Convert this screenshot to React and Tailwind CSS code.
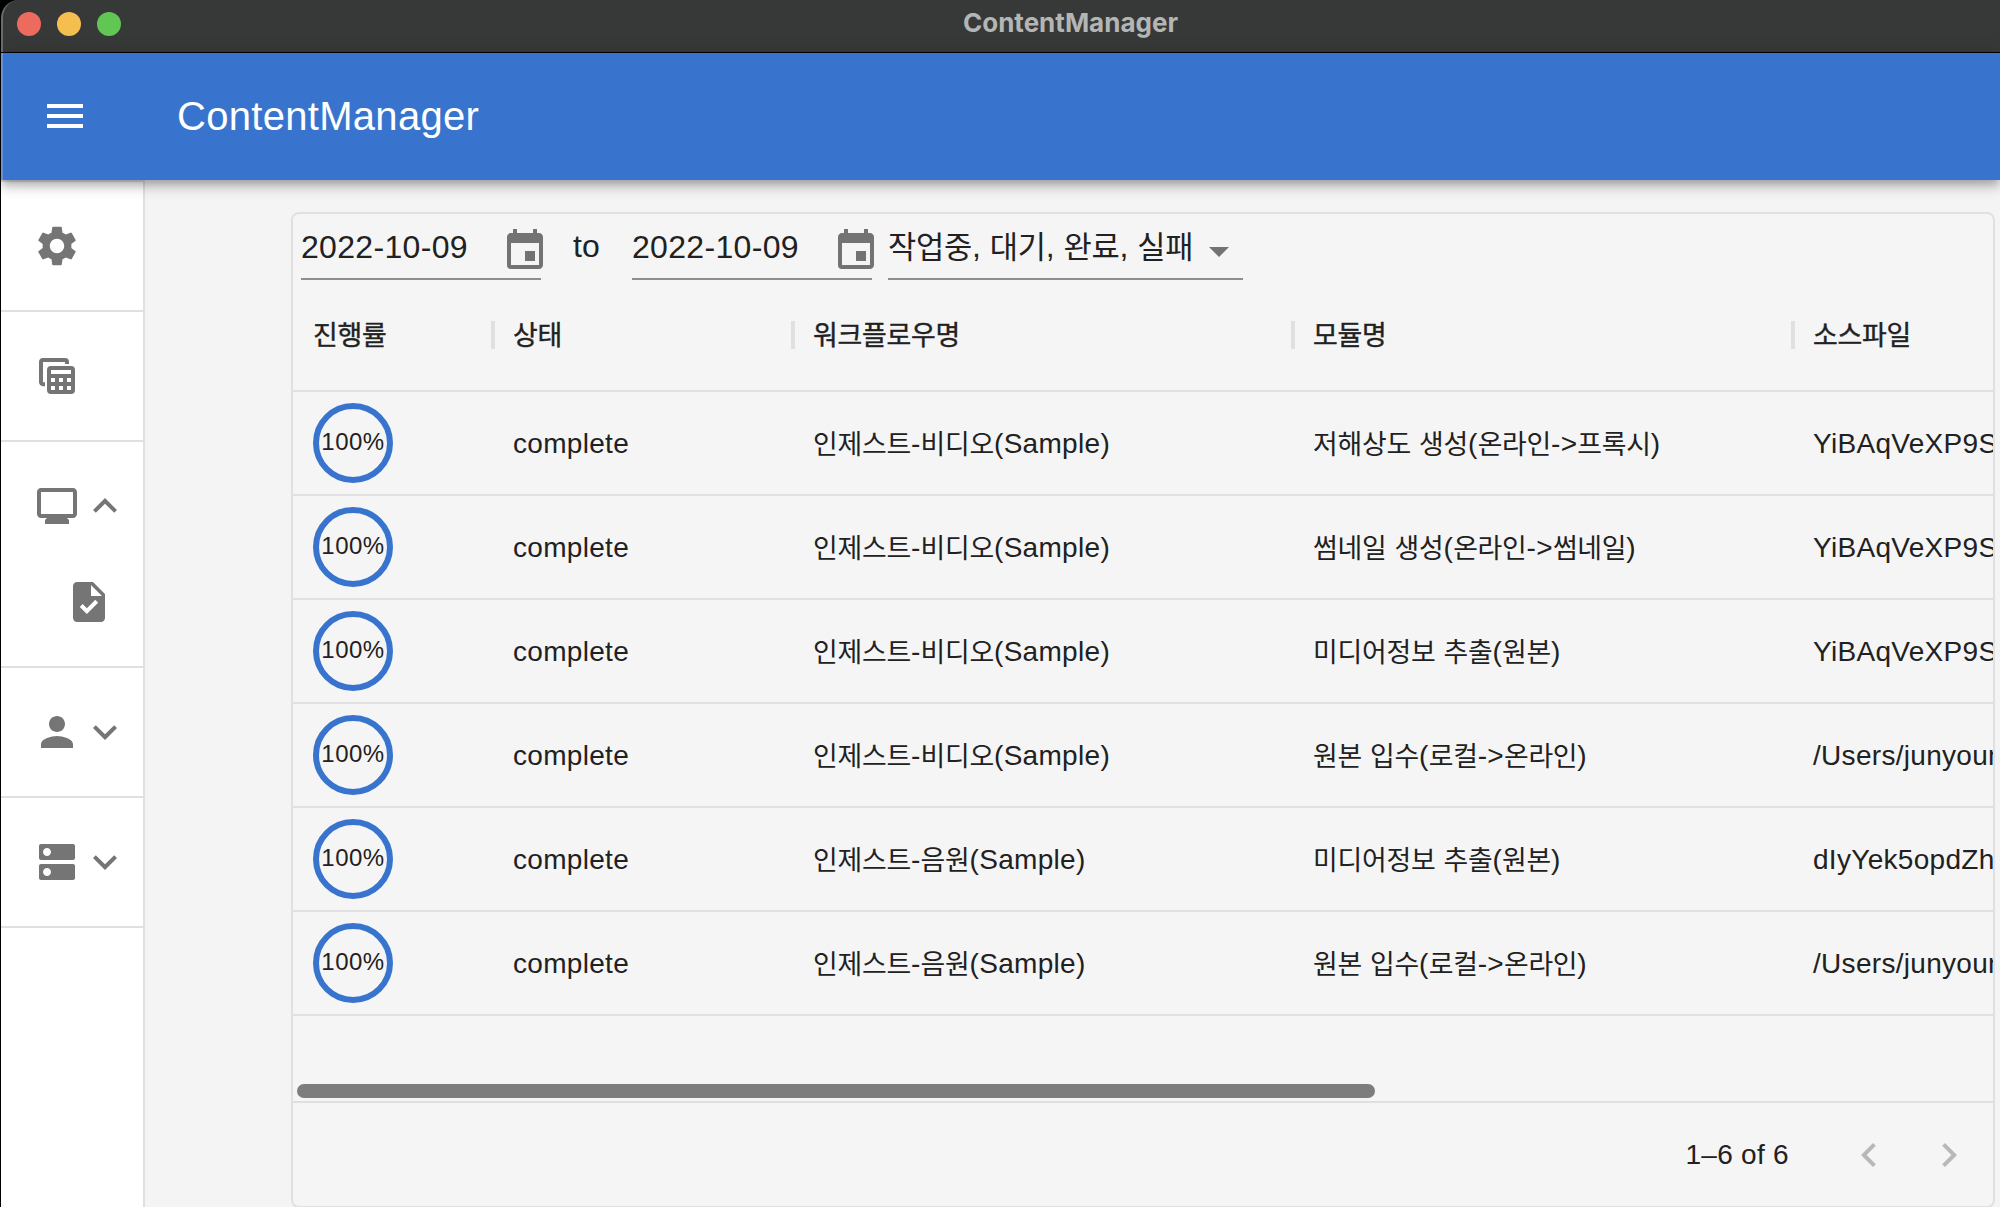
import { MdSettings, MdPerson, MdDns, MdExpandLess, MdExpandMore, MdEvent, MdArrowDropDown, MdMenu, MdChevronLeft, MdChevronRight } from 'react-icons/md';

const ROWS = [
  ['인제스트-비디오(Sample)', '저해상도 생성(온라인->프록시)', 'YiBAqVeXP9S'],
  ['인제스트-비디오(Sample)', '썸네일 생성(온라인->썸네일)', 'YiBAqVeXP9S'],
  ['인제스트-비디오(Sample)', '미디어정보 추출(원본)', 'YiBAqVeXP9S'],
  ['인제스트-비디오(Sample)', '원본 입수(로컬->온라인)', '/Users/junyoun'],
  ['인제스트-음원(Sample)', '미디어정보 추출(원본)', 'dIyYek5opdZh'],
  ['인제스트-음원(Sample)', '원본 입수(로컬->온라인)', '/Users/junyoun'],
];

// Sets Hangul runs slightly smaller than the Latin text around them.
function Ko({ children }) {
  return children.split(/([가-힣]+)/).map((part, i) =>
    /[가-힣]/.test(part) ? <span key={i} className="align-[-0.5px] text-[0.96em] tracking-[-0.009em]">{part}</span> : part
  );
}

function TableCopyIcon() {
  return (
    <svg viewBox="0 0 24 24" className="size-12" fill="none" stroke="currentColor" strokeWidth="2">
      <path d="M6 16.100H5a1.100 1.100 0 0 1-1-1V4.900a1 1 0 0 1 1-.9h11a1 1 0 0 1 1 1v1" />
      <rect x="8" y="8" width="12" height="12" rx="1" />
      <path d="M8 12h12M8 16h12M12 12v8M16 12v8" />
    </svg>
  );
}

function MonitorIcon() {
  return (
    <svg viewBox="0 0 24 24" className="size-12" fill="currentColor">
      <path d="M20 3H4c-1.100 0-2 .9-2 2v11c0 1.100.9 2 2 2h3l-1 1v2h12v-2l-1-1h3c1.100 0 2-.9 2-2V5c0-1.100-.9-2-2-2zm0 13H4V5h16v11z" />
    </svg>
  );
}

function TaskIcon() {
  return (
    <svg viewBox="0 0 24 24" className="size-12" fill="currentColor">
      <path d="M14 2H6c-1.100 0-2 .9-2 2v16c0 1.100.9 2 2 2h12c1.100 0 2-.9 2-2V8l-6-6zm-3.060 16L7.400 14.460l1.410-1.410 2.120 2.120 4.240-4.240 1.410 1.410L10.940 18zM13 9V3.500L18.500 9H13z" />
    </svg>
  );
}

function SideRow({ icon, arrow }) {
  return (
    <div className="flex h-32 items-center pl-8">
      {icon}
      {arrow}
    </div>
  );
}

function DateField() {
  return (
    <div className="flex h-[66px] w-60 items-start border-b-2 border-[#8e8e8e]">
      <span className="w-[200px] shrink-0 whitespace-nowrap pt-[10px] text-[32px] leading-[46px] tracking-[0.01em]">2022-10-09</span>
      <MdEvent className="mt-[13px] size-12 shrink-0 text-[#737373]" />
    </div>
  );
}

const WIDTHS = ['w-[200px]', 'w-[300px]', 'w-[500px]', 'w-[500px]', 'w-[500px]'];

export default function App() {
  return (
    <div className="flex h-[1207px] w-[2000px] flex-col overflow-hidden border-l border-black bg-[#f4f4f4] font-['Liberation_Sans','Noto_Sans_CJK_KR',sans-serif] text-[#212121]">
      <div className="h-[53px] shrink-0 bg-black">
        <div className="relative flex h-[52px] items-start rounded-tl-[18px] border-l-2 border-[#6a6b6a] bg-[#373938] pl-3.5 pt-3">
          <div className="flex gap-4">
            <i className="size-6 rounded-full bg-[#ed6a5f]" />
            <i className="size-6 rounded-full bg-[#f5bf4f]" />
            <i className="size-6 rounded-full bg-[#62c655]" />
          </div>
          <div className="absolute inset-x-0 top-[6px] pl-[138px] text-center font-['Inter',sans-serif] text-[26px] font-bold leading-[34px] text-[#b4b5b5]">ContentManager</div>
        </div>
      </div>
      <header className="relative z-10 flex h-[127px] shrink-0 items-center border-l-2 border-[#6793d6] bg-[#3874cd] pb-px pl-[38px] text-white shadow-[0_4px_8px_-2px_rgba(0,0,0,0.2),0_8px_10px_rgba(0,0,0,0.14),0_2px_20px_rgba(0,0,0,0.12)]">
        <MdMenu className="size-12" />
        <h1 className="ml-[88px] pb-px text-[40px] tracking-[0.0075em]">ContentManager</h1>
      </header>
      <div className="flex min-h-0 flex-1">
        <nav className="w-36 shrink-0 border-r-2 border-t-2 border-[#e0e0e0] bg-white text-[#757575]">
          <div className="border-b-2 border-[#e0e0e0]"><SideRow icon={<MdSettings className="size-12" />} /></div>
          <div className="border-b-2 border-[#e0e0e0]"><SideRow icon={<TableCopyIcon />} /></div>
          <div className="h-[226px] border-b-2 border-[#e0e0e0]">
            <SideRow icon={<MonitorIcon />} arrow={<MdExpandLess className="size-12" />} />
            <div className="flex h-16 items-center pl-16"><TaskIcon /></div>
          </div>
          <div className="border-b-2 border-[#e0e0e0]"><SideRow icon={<MdPerson className="size-12" />} arrow={<MdExpandMore className="size-12" />} /></div>
          <div className="border-b-2 border-[#e0e0e0]"><SideRow icon={<MdDns className="size-12" />} arrow={<MdExpandMore className="size-12" />} /></div>
        </nav>
        <main className="ml-[146px] mt-8 flex h-[996px] w-[1704px] shrink-0 flex-col overflow-hidden rounded-lg border-2 border-[#e0e0e0] bg-[#f5f5f5]">
          <div className="flex h-[66px] shrink-0 pl-2">
            <DateField />
            <span className="w-[91px] pl-8 pt-[9px] text-[32px] leading-[46px]">to</span>
            <DateField />
            <div className="ml-4 flex h-[66px] w-[355px] border-b-2 border-[#8e8e8e]">
              <span className="w-[307px] shrink-0 whitespace-nowrap pt-[9px] text-[32px] leading-[46px]"><Ko>작업중, 대기, 완료, 실패</Ko></span>
              <MdArrowDropDown className="mt-[13px] size-12 shrink-0 text-[#737373]" />
            </div>
          </div>
          <div className="flex h-[112px] shrink-0 border-b-2 border-[#e0e0e0] text-[28px] [-webkit-text-stroke:0.4px_#212121]">
            {['진행률', '상태', '워크플로우명', '모듈명', '소스파일'].map((h, i) => (
              <div key={h} className={`flex h-[110px] shrink-0 items-center justify-between pl-5 ${WIDTHS[i]}`}>
                <span><Ko>{h}</Ko></span>
                <i className="-mr-0.5 h-7 w-1 bg-[#e0e0e0]" />
              </div>
            ))}
          </div>
          {ROWS.map(([flow, mod, src], i) => (
            <div key={i} className="flex h-[104px] shrink-0 items-center border-b-2 border-[#e0e0e0] text-[28px] tracking-[0.01071em]">
              <div className="w-[200px] shrink-0 pl-5">
                <div className="flex size-20 items-center justify-center rounded-full border-[6.500px] border-[#3874cd]">
                  <span className="pb-[3px] text-2xl tracking-[0.02em]">100%</span>
                </div>
              </div>
              <div className="w-[300px] shrink-0 pl-5 pt-px">complete</div>
              <div className="w-[500px] shrink-0 pl-5 pt-px"><Ko>{flow}</Ko></div>
              <div className="w-[500px] shrink-0 pl-5 pt-px"><Ko>{mod}</Ko></div>
              <div className="w-[500px] shrink-0 pl-5 pt-px">{src}</div>
            </div>
          ))}
          <div className="flex h-[87px] shrink-0 items-end border-b-2 border-[#e0e0e0] pb-[3px] pl-1">
            <div className="h-[14px] w-[1078px] rounded-full bg-[#7d7d7d]" />
          </div>
          <div className="flex flex-1 items-center justify-end pr-5 text-[28px] tracking-[0.01071em]">
            <span className="mr-14">1–6 of 6</span>
            <MdChevronLeft className="mr-8 size-12 text-[#b8b8b8]" />
            <MdChevronRight className="size-12 text-[#b8b8b8]" />
          </div>
        </main>
      </div>
    </div>
  );
}
